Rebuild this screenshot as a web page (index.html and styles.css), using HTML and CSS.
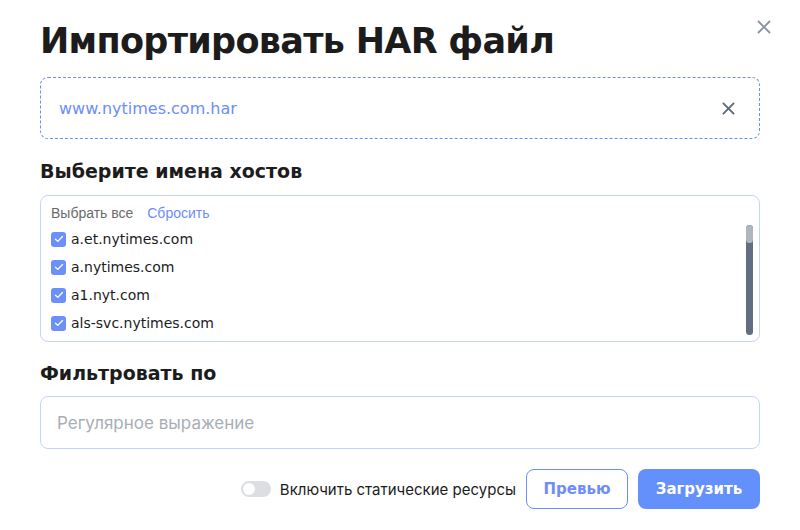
FILE: index.html
```html
<!DOCTYPE html>
<html lang="ru">

<head>
  <meta charset="UTF-8">
  <meta name="viewport" content="width=device-width, initial-scale=1.0">
  <title>Импортировать HAR файл</title>
  <link rel="stylesheet" href="styles.css">
</head>

<body>
  <div class="modal">
    <button class="close" aria-label="Закрыть">
      <svg width="14" height="14" viewBox="0 0 14 14"><path d="M1.5 1.5l11 11M12.5 1.5l-11 11" stroke="currentColor" stroke-width="1.8" stroke-linecap="round"/></svg>
    </button>
    <h1>Импортировать HAR файл</h1>

    <div class="dropzone">
      <span class="file-name">www.nytimes.com.har</span>
      <button class="remove" aria-label="Удалить">
        <svg width="13" height="13" viewBox="0 0 14 14"><path d="M1.5 1.5l11 11M12.5 1.5l-11 11" stroke="currentColor" stroke-width="2" stroke-linecap="round"/></svg>
      </button>
    </div>

    <h2>Выберите имена хостов</h2>
    <div class="hosts">
      <div class="hosts-list">
        <div class="hosts-actions">
          <span class="select-all">Выбрать все</span>
          <span class="reset">Сбросить</span>
        </div>
        <label class="host"><span class="check"><svg width="10" height="8" viewBox="0 0 10 8"><path d="M1.5 4.2l2.3 2.2 4.7-4.9" fill="none" stroke="#fff" stroke-width="1.3" stroke-linecap="round" stroke-linejoin="round"/></svg></span>a.et.nytimes.com</label>
        <label class="host"><span class="check"><svg width="10" height="8" viewBox="0 0 10 8"><path d="M1.5 4.2l2.3 2.2 4.7-4.9" fill="none" stroke="#fff" stroke-width="1.3" stroke-linecap="round" stroke-linejoin="round"/></svg></span>a.nytimes.com</label>
        <label class="host"><span class="check"><svg width="10" height="8" viewBox="0 0 10 8"><path d="M1.5 4.2l2.3 2.2 4.7-4.9" fill="none" stroke="#fff" stroke-width="1.3" stroke-linecap="round" stroke-linejoin="round"/></svg></span>a1.nyt.com</label>
        <label class="host"><span class="check"><svg width="10" height="8" viewBox="0 0 10 8"><path d="M1.5 4.2l2.3 2.2 4.7-4.9" fill="none" stroke="#fff" stroke-width="1.3" stroke-linecap="round" stroke-linejoin="round"/></svg></span>als-svc.nytimes.com</label>
      </div>
      <div class="scrollbar"><div class="thumb"></div></div>
    </div>

    <h2>Фильтровать по</h2>
    <div class="filter">Регулярное выражение</div>

    <div class="footer">
      <label class="toggle"><span class="switch"></span>Включить статические ресурсы</label>
      <button class="btn btn-outline">Превью</button>
      <button class="btn btn-primary">Загрузить</button>
    </div>
  </div>
</body>

</html>
```

FILE: styles.css
```css
body {
  margin: 0;
  background: #fff;
  font-family: "DejaVu Sans", "Noto Sans", sans-serif;
  color: #1c1c1c;
}

button {
  font-family: inherit;
  border: none;
  background: none;
  padding: 0;
  cursor: pointer;
}

.modal {
  position: relative;
  width: 720px;
  padding: 20px 40px 0;
}

.close {
  position: absolute;
  top: 20px;
  right: 29px;
  color: #8a93a0;
  display: flex;
}

h1 {
  margin: 0 0 15px;
  font-size: 35px;
  line-height: 42px;
  font-weight: 700;
  letter-spacing: -0.7px;
}

.dropzone {
  height: 60px;
  border: 1px dashed #6a8ff2;
  border-radius: 8px;
  display: flex;
  align-items: center;
  justify-content: space-between;
  padding: 0 24px 0 18px;
}

.file-name {
  color: #6d8dfb;
  font-size: 16px;
}

.remove {
  color: #5d6878;
  display: flex;
}

h2 {
  margin: 20px 0 12px;
  font-size: 19px;
  line-height: 24px;
  font-weight: 700;
}

.hosts + h2 {
  margin: 19px 0 11px;
}

.hosts {
  height: 145px;
  border: 1px solid #c3d4fb;
  border-radius: 8px;
  display: flex;
  justify-content: space-between;
  padding: 0 6px 0 10px;
}

.hosts-list {
  padding-top: 8px;
}

.hosts-actions {
  font-family: "Liberation Sans", sans-serif;
  font-size: 14px;
  line-height: 18px;
  margin-bottom: 3px;
}

.select-all {
  color: #6b6b6b;
  margin-right: 10px;
}

.reset {
  color: #6d8dfb;
}

.host {
  display: flex;
  align-items: center;
  height: 28px;
  font-size: 14px;
  color: #1c1c1c;
}

.check {
  width: 15px;
  height: 15px;
  border-radius: 3px;
  background: #6b90fb;
  display: flex;
  align-items: center;
  justify-content: center;
  margin-right: 5px;
}

.scrollbar {
  width: 7px;
  height: 110px;
  margin-top: 29px;
  border-radius: 4px;
  background: #5f6e82;
  overflow: hidden;
}

.thumb {
  height: 18px;
  background: #b0b6be;
  border-radius: 4px;
}

.filter {
  height: 51px;
  border: 1px solid #c3d4fb;
  border-radius: 8px;
  display: flex;
  align-items: center;
  padding: 0 16px;
  font-family: "Inter", sans-serif;
  font-size: 17px;
  color: #a9aeb6;
}

.footer {
  display: flex;
  justify-content: flex-end;
  align-items: center;
  margin-top: 20px;
  gap: 10px;
}

.toggle {
  display: flex;
  align-items: center;
  font-family: "Inter", sans-serif;
  font-size: 15px;
  color: #1c1c1c;
}

.switch {
  width: 30px;
  height: 16px;
  border-radius: 8px;
  background: #dcdee2;
  position: relative;
  margin-right: 9px;
}

.switch::after {
  content: "";
  position: absolute;
  left: 2px;
  top: 2px;
  width: 12px;
  height: 12px;
  border-radius: 50%;
  background: #fff;
}

.btn {
  height: 40px;
  border-radius: 8px;
  font-size: 15px;
  font-weight: 700;
}

.btn-outline {
  width: 102px;
  border: 1px solid #6d8dfb;
  color: #6d8dfb;
}

.btn-primary {
  width: 122px;
  background: #6490fc;
  color: #fff;
}
```
